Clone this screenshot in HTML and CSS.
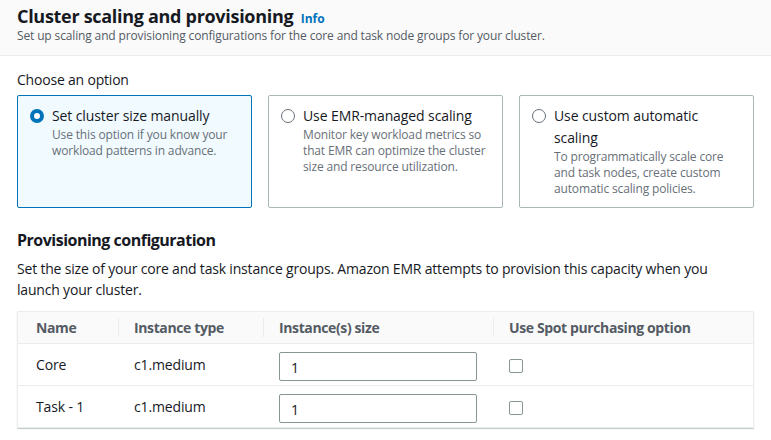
FILE: index.html
```html
<!DOCTYPE html>
<html>
<head>
<meta charset="utf-8">
<link rel="stylesheet" href="styles.css">
</head>
<body>
<header class="page-head">
  <h1 class="title">Cluster scaling and provisioning <a class="info">Info</a></h1>
  <p class="subtitle">Set up scaling and provisioning configurations for the core and task node groups for your cluster.</p>
</header>
<main class="content">
  <div class="label">Choose an option</div>
  <div class="options">
    <div class="option selected">
      <span class="radio"></span>
      <div class="option-text">
        <div class="option-title">Set cluster size manually</div>
        <div class="option-desc">Use this option if you know your workload patterns in advance.</div>
      </div>
    </div>
    <div class="option">
      <span class="radio"></span>
      <div class="option-text">
        <div class="option-title">Use EMR-managed scaling</div>
        <div class="option-desc">Monitor key workload metrics so that EMR can optimize the cluster size and resource utilization.</div>
      </div>
    </div>
    <div class="option">
      <span class="radio"></span>
      <div class="option-text">
        <div class="option-title">Use custom automatic scaling</div>
        <div class="option-desc">To programmatically scale core and task nodes, create custom automatic scaling policies.</div>
      </div>
    </div>
  </div>
  <h2 class="section-title">Provisioning configuration</h2>
  <p class="section-desc">Set the size of your core and task instance groups. Amazon EMR attempts to provision this capacity when you launch your cluster.</p>
  <div class="table">
    <div class="row head">
      <div class="cell c1">Name</div>
      <div class="cell c2">Instance type</div>
      <div class="cell c3">Instance(s) size</div>
      <div class="cell c4">Use Spot purchasing option</div>
    </div>
    <div class="row">
      <div class="cell c1">Core</div>
      <div class="cell c2">c1.medium</div>
      <div class="cell c3"><div class="input">1</div></div>
      <div class="cell c4"><span class="checkbox"></span></div>
    </div>
    <div class="row">
      <div class="cell c1">Task - 1</div>
      <div class="cell c2">c1.medium</div>
      <div class="cell c3"><div class="input">1</div></div>
      <div class="cell c4"><span class="checkbox"></span></div>
    </div>
  </div>
</main>
</body>
</html>
```
FILE: styles.css
```css
* { box-sizing: border-box; }
html, body { margin: 0; padding: 0; }
body {
  font-family: "Open Sans", "Liberation Sans", sans-serif;
  color: #16191f;
  background: #fff;
  width: 771px;
  height: 440px;
  overflow: hidden;
}
.page-head {
  background: #fafafa;
  border-bottom: 1px solid #eaeded;
  height: 56px;
  padding: 4px 17px 0;
}
.title {
  margin: 0;
  font-size: 18px;
  line-height: 24px;
  height: 24px;
  font-weight: 700;
  letter-spacing: -0.3px;
}
.info {
  color: #0073bb;
  font-size: 12px;
  line-height: 0;
  font-weight: 700;
  margin-left: 3px;
  letter-spacing: 0;
}
.subtitle {
  margin: 0;
  font-size: 12px;
  line-height: 16px;
  color: #545b64;
  letter-spacing: -0.14px;
}
.content { padding: 0 17px; }
.label {
  margin-top: 14px;
  font-size: 14px;
  line-height: 20px;
  letter-spacing: -0.2px;
}
.options {
  display: grid;
  grid-template-columns: repeat(3, 235px);
  column-gap: 16px;
  margin-top: 5px;
}
.option {
  height: 113px;
  border: 1px solid #aab7b8;
  border-radius: 2px;
  display: flex;
  padding: 9px 8px 0 12px;
  gap: 8px;
}
.option.selected {
  border-color: #0073bb;
  background: #f1faff;
}
.radio {
  flex: none;
  width: 14px;
  height: 14px;
  margin-top: 4px;
  border-radius: 50%;
  border: 1px solid #687078;
  background: #fff;
}
.selected .radio {
  border: 4px solid #0073bb;
}
.option-title {
  font-size: 14px;
  line-height: 22px;
  letter-spacing: -0.1px;
}
.option-desc {
  font-size: 12px;
  line-height: 16px;
  color: #687078;
  letter-spacing: -0.15px;
}
.section-title {
  margin: 21px 0 0;
  font-size: 16px;
  line-height: 22px;
  font-weight: 700;
  letter-spacing: -0.5px;
}
.section-desc {
  margin: 7px 0 0;
  max-width: 700px;
  font-size: 14px;
  line-height: 21px;
  letter-spacing: -0.19px;
}
.table {
  margin-top: 11px;
  border: 1px solid #eaeded;
  border-radius: 1px;
  box-shadow: 0 1px 1px rgba(0,28,36,0.25);
}
.row {
  display: grid;
  grid-template-columns: 100px 145px 230px 1fr;
  height: 42px;
  align-items: center;
  border-top: 1px solid #eaeded;
  font-size: 14px;
  letter-spacing: -0.15px;
}
.row.head {
  border-top: none;
  background: #fafafa;
  height: 31px;
  font-weight: 700;
  color: #545b64;
  letter-spacing: -0.38px;
}
.cell { padding-left: 18px; }
.row .c2, .row .c3, .row .c4 { padding-left: 16px; }
.head .c2, .head .c3, .head .c4 { border-left: 1px solid #eaeded; padding-left: 15px; }
.input {
  width: 198px;
  height: 29px;
  border: 1px solid #879596;
  border-radius: 2px;
  padding: 4px 11px 0;
  font-size: 14px;
  line-height: 22px;
  color: #16191f;
  margin-top: 3px;
}
.checkbox {
  display: block;
  width: 14px;
  height: 14px;
  border: 1px solid #879596;
  border-radius: 2px;
  background: #fff;
  margin-top: 2px;
}
```
